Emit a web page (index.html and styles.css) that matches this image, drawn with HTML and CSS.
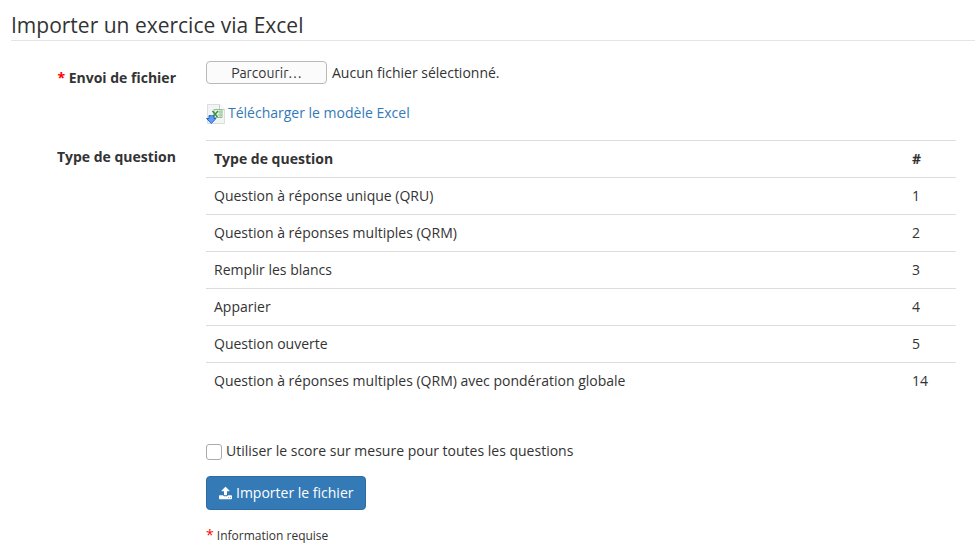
FILE: index.html
```html
<!DOCTYPE html>
<html lang="fr">
<head>
<meta charset="utf-8">
<title>Importer un exercice via Excel</title>
<link rel="stylesheet" href="styles.css">
</head>
<body>
<form class="page">
  <h1 class="legend">Importer un exercice via Excel</h1>
  <div class="row file-row">
    <div class="label"><span class="required">*</span> Envoi de fichier</div>
    <div class="field">
      <div class="picker"><button type="button" class="browse">Parcourir…</button><span>Aucun fichier sélectionné.</span></div>
      <a class="download"><svg class="excel" viewBox="0 0 20 20"><path d="M1.500.5h12l5 5v14h-17z" fill="#f3f4f4" stroke="#dcdede"/><path d="M13.500.5v5h5" fill="#fff" stroke="#c9cbcb"/><path d="M8 5.500h8v8H8z" fill="#e8f5e6" stroke="#8cc48e"/><path d="M12 8h4m-4 3h4m-2-5v8" stroke="#8cc48e" stroke-width=".8"/><path d="m6.500 7 5 6M12 7l-5.500 6" stroke="#3c8f43" stroke-width="1.500"/><path d="M3 11.500l5 .5v2.500h2L5.300 19.500.5 14.500H3z" fill="#5d9ff5" stroke="#2767cd"/></svg><span>Télécharger le modèle Excel</span></a>
    </div>
  </div>
  <div class="row type-row">
    <div class="label">Type de question</div>
    <table class="types">
      <thead><tr><th>Type de question</th><th class="num">#</th></tr></thead>
      <tbody>
        <tr><td>Question à réponse unique (QRU)</td><td>1</td></tr>
        <tr><td>Question à réponses multiples (QRM)</td><td>2</td></tr>
        <tr><td>Remplir les blancs</td><td>3</td></tr>
        <tr><td>Apparier</td><td>4</td></tr>
        <tr><td>Question ouverte</td><td>5</td></tr>
        <tr><td>Question à réponses multiples (QRM) avec pondération globale</td><td>14</td></tr>
      </tbody>
    </table>
  </div>
  <div class="actions">
    <label class="check"><input type="checkbox"><span>Utiliser le score sur mesure pour toutes les questions</span></label>
    <button type="button" class="submit"><svg class="upload" viewBox="0 0 1664 1600"><path fill="#fff" d="M1280 1344q0-26-19-45t-45-19-45 19-19 45 19 45 45 19 45-19 19-45zm256 0q0-26-19-45t-45-19-45 19-19 45 19 45 45 19 45-19 19-45zm128-224v320q0 40-28 68t-68 28H96q-40 0-68-28t-28-68v-320q0-40 28-68t68-28h427q21 56 70.500 92t110.500 36h256q61 0 110.500-36t70.500-92h427q40 0 68 28t28 68zm-325-648q-17 40-59 40h-256v448q0 26-19 45t-45 19H704q-26 0-45-19t-19-45V512H384q-42 0-59-40-17-39 14-69L787-45q18-19 45-19t45 19l448 448q31 30 14 69z"/></svg><span>Importer le fichier</span></button>
    <p class="note"><span class="required">*</span> Information requise</p>
  </div>
</form>
</body>
</html>
```
FILE: styles.css
```css
* { box-sizing: border-box; }
body { margin: 0; background: #fff; color: #333; font: 14px/20px "Open Sans", sans-serif; }
.page { padding: 10px 0 0 11px; }
.legend { margin: 0; height: 31px; border-bottom: 1px solid #e5e5e5; font-size: 21px; font-weight: 400; line-height: 30px; }
.row { display: flex; }
.file-row { height: 99px; padding-top: 20px; }
.label { width: 195px; padding: 7px 30px 0 0; text-align: right; font-weight: 700; }
.required { color: #f00; }
.picker { display: flex; align-items: center; height: 23px; gap: 5px; }
.browse { width: 121px; height: 23px; border: 1px solid #b9b9b9; border-radius: 4px; padding: 2px 0 0; background: #fbfbfb; color: #333; font: 14px/19px Ubuntu, "Open Sans", sans-serif; }
.download { display: flex; margin-top: 19px; gap: 2px; color: #337ab7; }
.excel { width: 20px; height: 20px; margin-top: 1px; }
.types { width: 750px; border-collapse: collapse; }
.types th, .types td { height: 37px; padding: 8px; border-top: 1px solid #ddd; text-align: left; }
.types .num { width: 52px; }
.actions { display: flex; flex-direction: column; align-items: flex-start; padding: 41px 0 0 195px; }
.check { display: flex; align-items: center; gap: 4px; }
.check input { appearance: none; width: 16px; height: 16px; margin: 2px 0 0; border: 1px solid #aaa; border-radius: 3px; background: #fff; }
.submit { display: flex; align-items: center; gap: 4px; width: 160px; height: 34px; margin-top: 15px; padding: 0 12px; border: 1px solid #2e6da4; border-radius: 4px; background: #337ab7; color: #fff; font: 14px/20px "Open Sans", sans-serif; white-space: nowrap; }
.upload { flex: none; width: 13px; height: 13px; margin-top: 1px; overflow: visible; }
.note { margin: 15px 0 0; font-size: 12px; }
.note .required { font-size: 14px; }
```
